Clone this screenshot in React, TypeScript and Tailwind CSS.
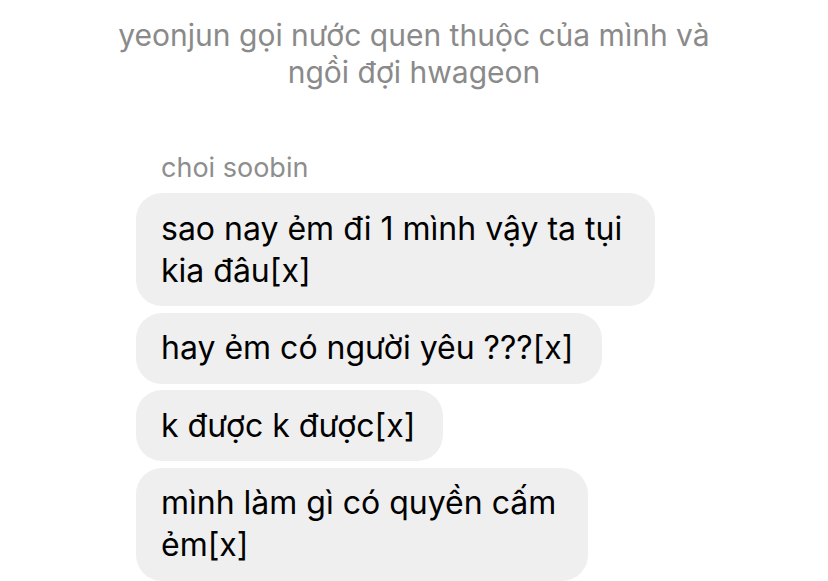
import React from "react";

const messages = [
  { lines: ["sao nay ẻm đi 1 mình vậy ta tụi", "kia đâu[x]"], w: "w-[519px]" },
  { lines: ["hay ẻm có người yêu ???[x]"], w: "" },
  { lines: ["k được k được[x]"], w: "" },
  { lines: ["mình làm gì có quyền cấm", "ẻm[x]"], w: "w-[452px]" },
];

const App = () => {
  return (
    <div
      className="w-[828px] h-[581px] overflow-hidden bg-white"
      style={{ fontFamily: "Inter, 'Noto Sans', sans-serif" }}
    >
      <p className="pt-[17px] text-center text-[30px] leading-[37px] text-[#8a8a8a] whitespace-nowrap">
        yeonjun gọi nước quen thuộc của mình và
        <br />
        ngồi đợi hwageon
      </p>

      <div className="mt-[60px] ml-[136px] flex flex-col items-start">
        <span className="pl-[25px] text-[27px] leading-[33px] text-[#8e8e8e]">
          choi soobin
        </span>
        <div className="mt-[9px] flex flex-col items-start gap-[6.5px]">
          {messages.map((m, i) => (
            <div
              key={i}
              className={`${m.w} rounded-[26px] bg-[#efefef] pl-[25px] pr-[28px] py-[14.5px] text-[32px] leading-[42px] text-black whitespace-nowrap`}
            >
              {m.lines.map((l, j) => (
                <div key={j}>{l}</div>
              ))}
            </div>
          ))}
        </div>
      </div>
    </div>
  );
};

export default App;
